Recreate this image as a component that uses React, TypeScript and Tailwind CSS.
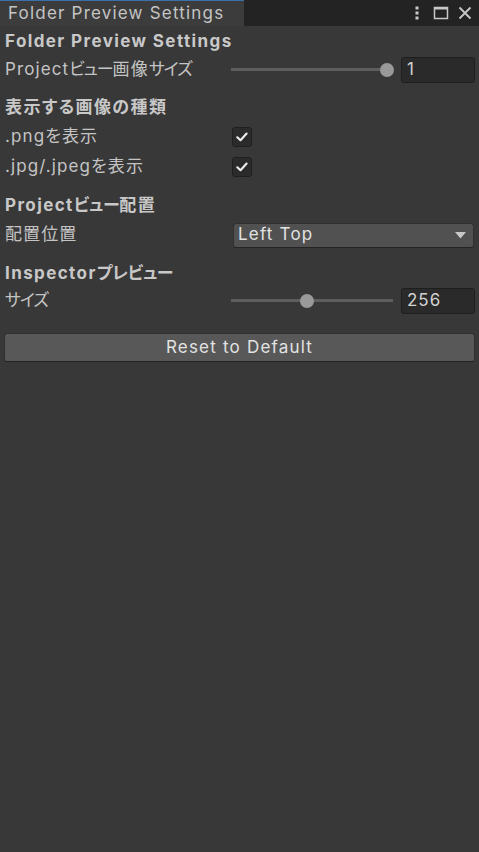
import React from "react";

const FONT: React.CSSProperties = {
  fontFamily: 'Inter, "Noto Sans CJK JP", sans-serif',
  fontFeatureSettings: '"palt"',
};

function K({ children, bold = false }: { children: React.ReactNode; bold?: boolean }) {
  return <span className={bold ? "tracking-[-0.3px]" : "tracking-[-1.1px]"}>{children}</span>;
}

function Header({ children, className = "" }: { children: React.ReactNode; className?: string }) {
  return (
    <div className={`h-[26px] flex items-center px-[5px] pt-[1px] font-bold text-[17px] tracking-[1.4px] text-[#c8c8c8] whitespace-nowrap ${className}`}>
      <span>{children}</span>
    </div>
  );
}

function Label({ children }: { children: React.ReactNode }) {
  return <div className="w-[231px] shrink-0 pl-[5px] text-[17px] tracking-[1.1px] text-[#c4c4c4] whitespace-nowrap">{children}</div>;
}

function Slider({ knob }: { knob: number }) {
  return (
    <div className="relative w-[162px] h-[14px] shrink-0">
      <div className="absolute left-0 right-0 top-[5px] h-[3px] bg-[#5e5e5e]" />
      <div
        className="absolute top-0 w-[14px] h-[14px] rounded-full bg-[#999999]"
        style={{ left: knob - 7 }}
      />
    </div>
  );
}

function NumField({ value }: { value: string }) {
  return (
    <div className="ml-[8px] w-[74px] h-[26px] rounded-[3px] bg-[#2a2a2a] border border-[#1e1e1e] flex items-center pl-[5px] text-[17px] tracking-[1px] text-[#d2d2d2]">
      {value}
    </div>
  );
}

function Check() {
  return (
    <div className="ml-[1px] w-[20px] h-[20px] rounded-[3px] bg-[#2b2b2b] border border-[#1f1f1f] flex items-center justify-center">
      <svg width="14" height="14" viewBox="0 0 14 14">
        <path d="M2.3 7.3 L5.5 10.2 L11.6 3.6" stroke="#ececec" strokeWidth="2.2" fill="none" strokeLinecap="round" strokeLinejoin="round" />
      </svg>
    </div>
  );
}

export default function App() {
  return (
    <div className="w-[479px] h-[852px] bg-[#383838] overflow-hidden" style={FONT}>
      {/* Tab bar */}
      <div className="h-[26px] bg-[#232323] flex items-stretch">
        <div className="w-[244px] bg-[#3c3c3c] border-t border-[#3a6fa8] flex items-center pl-[8px] text-[17px] tracking-[1.2px] text-[#c4c4c4] whitespace-nowrap">
          Folder Preview Settings
        </div>
        <div className="flex-1 flex items-center justify-end pr-[6px]">
          <svg width="8" height="16" viewBox="0 0 8 16" className="mr-[12px]">
            <rect x="2.5" y="1.5" width="3" height="3" fill="#c8c8c8" />
            <rect x="2.5" y="6.5" width="3" height="3" fill="#c8c8c8" />
            <rect x="2.5" y="11.5" width="3" height="3" fill="#c8c8c8" />
          </svg>
          <svg width="16" height="16" viewBox="0 0 16 16" className="mr-[8px]">
            <rect x="1.5" y="2.5" width="13" height="11" fill="none" stroke="#c8c8c8" strokeWidth="1.5" />
            <rect x="1.5" y="2" width="13" height="2.5" fill="#c8c8c8" />
          </svg>
          <svg width="16" height="16" viewBox="0 0 16 16">
            <path d="M2.5 2.5 L13.5 13.5 M13.5 2.5 L2.5 13.5" stroke="#c8c8c8" strokeWidth="1.8" />
          </svg>
        </div>
      </div>

      <Header className="mt-[2px]">Folder Preview Settings</Header>
      <div className="h-[28px] mt-[2px] flex items-center">
        <Label>Project<K>ビュー</K>画像<K>サイズ</K></Label>
        <Slider knob={156} />
        <NumField value="1" />
      </div>

      <Header className="mt-[10px]">表示する画像の種類</Header>
      <div className="h-[30px] mt-[2px] flex items-center">
        <Label>.pngを表示</Label>
        <Check />
      </div>
      <div className="h-[30px] flex items-center">
        <Label>.jpg/.jpegを表示</Label>
        <Check />
      </div>

      <Header className="mt-[10px]">Project<K bold>ビュー</K>配置</Header>
      <div className="h-[30px] mt-[2px] flex items-center">
        <Label>配置位置</Label>
        <div className="ml-[2px] w-[241px] h-[25px] rounded-[3px] bg-[#515151] border border-[#303030] border-b-[#242424] flex items-center justify-between pl-[4px] pr-[7px] text-[17px] tracking-[1.2px] text-[#e2e2e2]">
          <span>Left Top</span>
          <svg width="11" height="7" viewBox="0 0 11 7">
            <path d="M0 0 H11 L5.5 6.5 Z" fill="#c8c8c8" />
          </svg>
        </div>
      </div>

      <Header className="mt-[10px]">Inspector<K bold>プレビュー</K></Header>
      <div className="h-[28px] mt-[1px] flex items-center">
        <Label><K>サイズ</K></Label>
        <Slider knob={76} />
        <NumField value="256" />
      </div>

      <div className="px-[4px] mt-[18px]">
        <div className="h-[29px] rounded-[3px] bg-[#585858] border border-[#303030] border-b-[#242424] flex items-center justify-center text-[17px] tracking-[1.2px] text-[#e2e2e2]">
          Reset to Default
        </div>
      </div>
    </div>
  );
}
